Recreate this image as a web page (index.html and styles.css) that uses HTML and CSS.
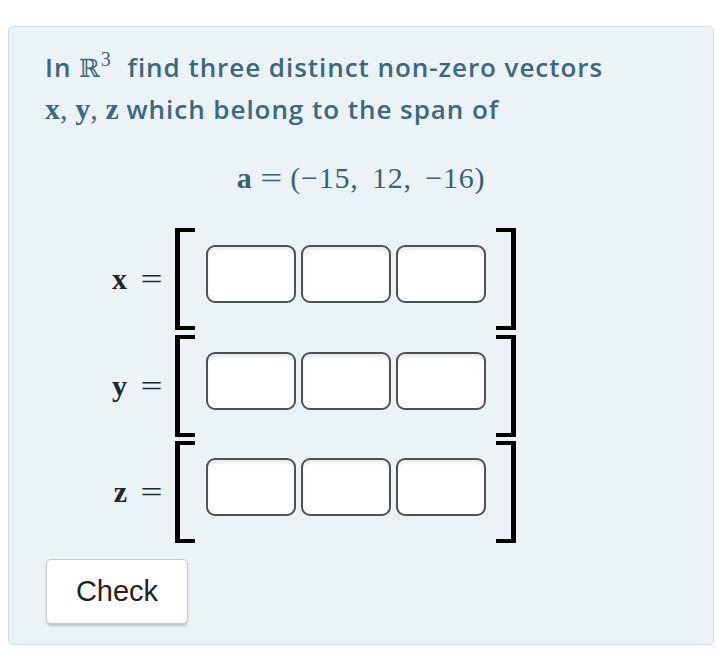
FILE: index.html
```html
<!DOCTYPE html>
<html lang="en">
<head>
<meta charset="utf-8">
<title>Span question</title>
<link rel="stylesheet" href="styles.css">
</head>
<body>
<div class="panel">
  <p class="prompt">In <span class="m rr">ℝ<sup class="sup">3</sup></span> find three distinct non-zero vectors<br><span class="m b">x</span><span class="m">,</span> <span class="m b">y</span><span class="m">,</span> <span class="m b">z</span> which belong to the span of</p>
  <div class="display"><span class="b">a</span><span class="op">=</span>(−15, 12, −16)</div>
  <div class="rows">
    <div class="row">
      <div class="label"><span class="b">x</span><span class="eq">=</span></div>
      <div class="br br-l"></div>
      <div class="cells"><input class="cell" type="text"><input class="cell" type="text"><input class="cell" type="text"></div>
      <div class="br br-r"></div>
    </div>
    <div class="row">
      <div class="label"><span class="b">y</span><span class="eq">=</span></div>
      <div class="br br-l"></div>
      <div class="cells"><input class="cell" type="text"><input class="cell" type="text"><input class="cell" type="text"></div>
      <div class="br br-r"></div>
    </div>
    <div class="row">
      <div class="label"><span class="b">z</span><span class="eq">=</span></div>
      <div class="br br-l"></div>
      <div class="cells"><input class="cell" type="text"><input class="cell" type="text"><input class="cell" type="text"></div>
      <div class="br br-r"></div>
    </div>
  </div>
  <button class="check" type="button">Check</button>
</div>
</body>
</html>
```
FILE: styles.css
```css
html, body {
  margin: 0;
  padding: 0;
  background: #ffffff;
}
body {
  font-family: "Open Sans", "Noto Sans", sans-serif;
}
.panel {
  margin: 26px 2px 0 8px;
  padding: 19px 36px 20px 36px;
  background: #ebf3f7;
  border: 1px solid #cfe1e4;
  border-radius: 5px;
}
.prompt {
  margin: 0;
  font-size: 26px;
  line-height: 42px;
  font-weight: 600;
  color: #3b6882;
  font-variant-ligatures: none;
  letter-spacing: 0.95px;
}
.m {
  font-family: "Liberation Serif", serif;
  font-size: 30px;
  line-height: 0;
  font-weight: 400;
  letter-spacing: 0;
}
.b {
  font-family: "Liberation Serif", serif;
  font-weight: 700;
}
.rr {
  font-family: "DejaVu Serif", serif;
  font-size: 25px;
  margin-right: 9px;
  font-weight: 400;
}
.sup {
  font-family: "Liberation Serif", serif;
  font-size: 20px;
  line-height: 0;
  vertical-align: 11px;
  margin-left: 1px;
}
.prompt .b { font-size: 30px; }
.display {
  margin-top: 28px;
  text-align: center;
  font-family: "Liberation Serif", serif;
  font-size: 30px;
  line-height: 40px;
  color: #3b6174;
  word-spacing: 5px;
  letter-spacing: 0.8px;
}
.display .op {
  margin: 0 10px;
  display: inline-block;
  transform: scaleX(1.3);
}
.rows {
  margin-top: 30px;
  display: flex;
  flex-direction: column;
  gap: 4.5px;
}
.row {
  display: flex;
  height: 102px;
}
.label {
  width: 130px;
  box-sizing: border-box;
  padding-right: 15px;
  display: flex;
  align-items: center;
  justify-content: flex-end;
  font-family: "Liberation Serif", serif;
  font-size: 30px;
  color: #1c2830;
}
.label .eq {
  margin-left: 16px;
  display: inline-block;
  transform: scaleX(1.3);
}
.br {
  width: 15px;
  height: 94px;
  border-top: 4px solid #000;
  border-bottom: 4px solid #000;
}
.br-l { border-left: 5px solid #000; }
.br-r { border-right: 5px solid #000; }
.cells {
  display: flex;
  gap: 5px;
  margin: 17px 10px 0 11px;
  align-self: flex-start;
}
.cell {
  width: 90px;
  height: 58px;
  box-sizing: border-box;
  margin: 0;
  padding: 0;
  border: 2px solid #4f5254;
  border-radius: 9px;
  background: #fff;
  box-shadow: inset 0 3px 3px rgba(0,0,0,0.08);
}
.check {
  display: block;
  margin: 16px 0 0 1px;
  width: 142px;
  height: 65px;
  padding: 0;
  background: #fff;
  border: 1px solid #c9cccf;
  border-radius: 5px;
  box-shadow: 0 2px 2px rgba(0,0,0,0.18);
  font-family: "Liberation Sans", Arial, sans-serif;
  font-size: 29px;
  color: #222;
}
```
